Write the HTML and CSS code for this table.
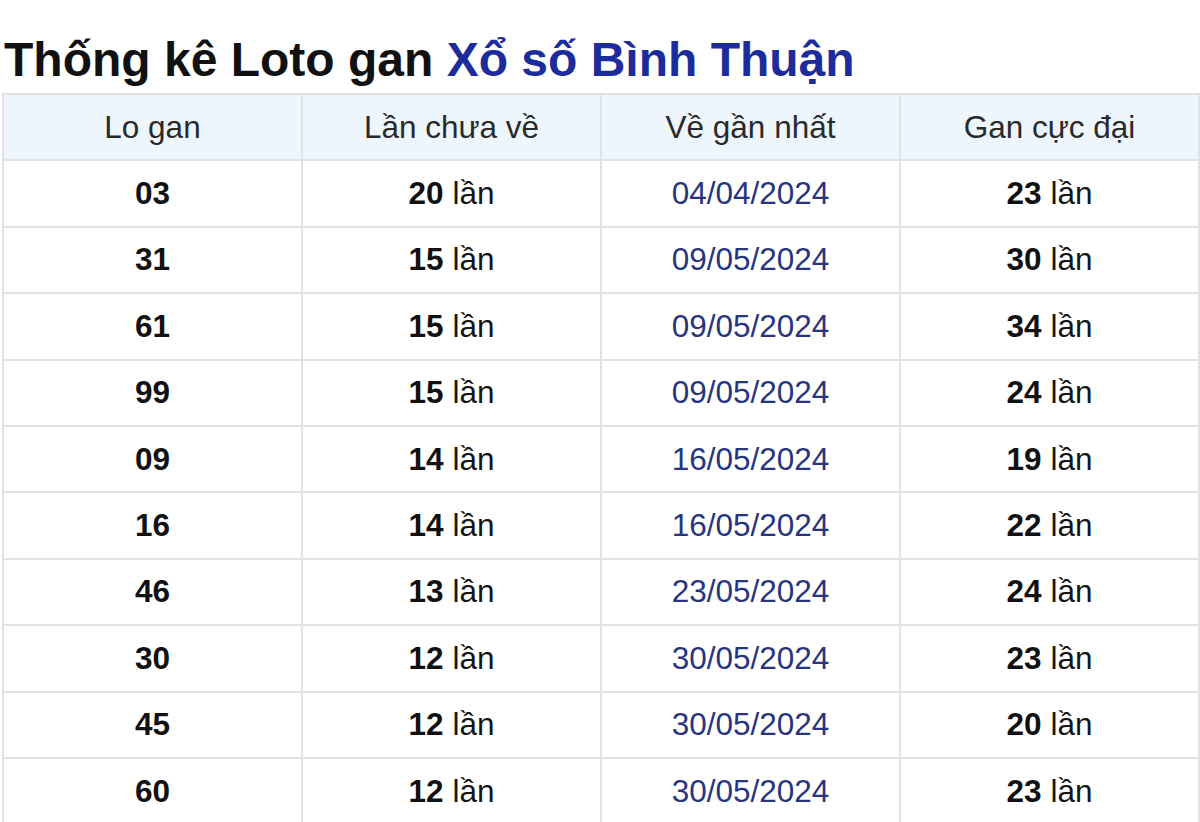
FILE: index.html
```html
<!DOCTYPE html>
<html lang="vi">
<head>
<meta charset="utf-8">
<title>Thống kê Loto gan Xổ số Bình Thuận</title>
<link rel="stylesheet" href="styles.css">
</head>
<body>
<h1 class="title">Thống kê Loto gan <span class="title-blue">Xổ số Bình Thuận</span></h1>
<table class="gan">
  <thead>
    <tr><th>Lo gan</th><th>Lần chưa về</th><th>Về gần nhất</th><th>Gan cực đại</th></tr>
  </thead>
  <tbody>
    <tr><td><b>03</b></td><td><b>20</b> lần</td><td class="date">04/04/2024</td><td><b>23</b> lần</td></tr>
    <tr><td><b>31</b></td><td><b>15</b> lần</td><td class="date">09/05/2024</td><td><b>30</b> lần</td></tr>
    <tr><td><b>61</b></td><td><b>15</b> lần</td><td class="date">09/05/2024</td><td><b>34</b> lần</td></tr>
    <tr><td><b>99</b></td><td><b>15</b> lần</td><td class="date">09/05/2024</td><td><b>24</b> lần</td></tr>
    <tr><td><b>09</b></td><td><b>14</b> lần</td><td class="date">16/05/2024</td><td><b>19</b> lần</td></tr>
    <tr><td><b>16</b></td><td><b>14</b> lần</td><td class="date">16/05/2024</td><td><b>22</b> lần</td></tr>
    <tr><td><b>46</b></td><td><b>13</b> lần</td><td class="date">23/05/2024</td><td><b>24</b> lần</td></tr>
    <tr><td><b>30</b></td><td><b>12</b> lần</td><td class="date">30/05/2024</td><td><b>23</b> lần</td></tr>
    <tr><td><b>45</b></td><td><b>12</b> lần</td><td class="date">30/05/2024</td><td><b>20</b> lần</td></tr>
    <tr><td><b>60</b></td><td><b>12</b> lần</td><td class="date">30/05/2024</td><td><b>23</b> lần</td></tr>
  </tbody>
</table>
</body>
</html>
```
FILE: styles.css
```css
html, body {
  margin: 0;
  padding: 0;
  background: #ffffff;
}
body {
  font-family: "Liberation Sans", Arial, sans-serif;
  color: #111111;
  overflow: hidden;
}
.title {
  margin: 32px 0 5px 4px;
  font-size: 48px;
  line-height: 56px;
  font-weight: bold;
  color: #111111;
  white-space: nowrap;
}
.title-blue {
  color: #1c2c9c;
}
.gan {
  margin-left: 2px;
  width: 1198px;
  table-layout: fixed;
  border-collapse: collapse;
  font-size: 31.5px;
}
.gan th,
.gan td {
  border: 2px solid #e0e2e6;
  height: 64.4px;
  padding: 0;
  text-align: center;
  vertical-align: middle;
}
.gan th {
  background: #eef6fd;
  font-weight: normal;
  color: #2a2a2a;
}
.gan td {
  color: #151515;
}
.gan td b {
  font-weight: bold;
  color: #111111;
}
.gan td.date {
  color: #28357e;
}
```
